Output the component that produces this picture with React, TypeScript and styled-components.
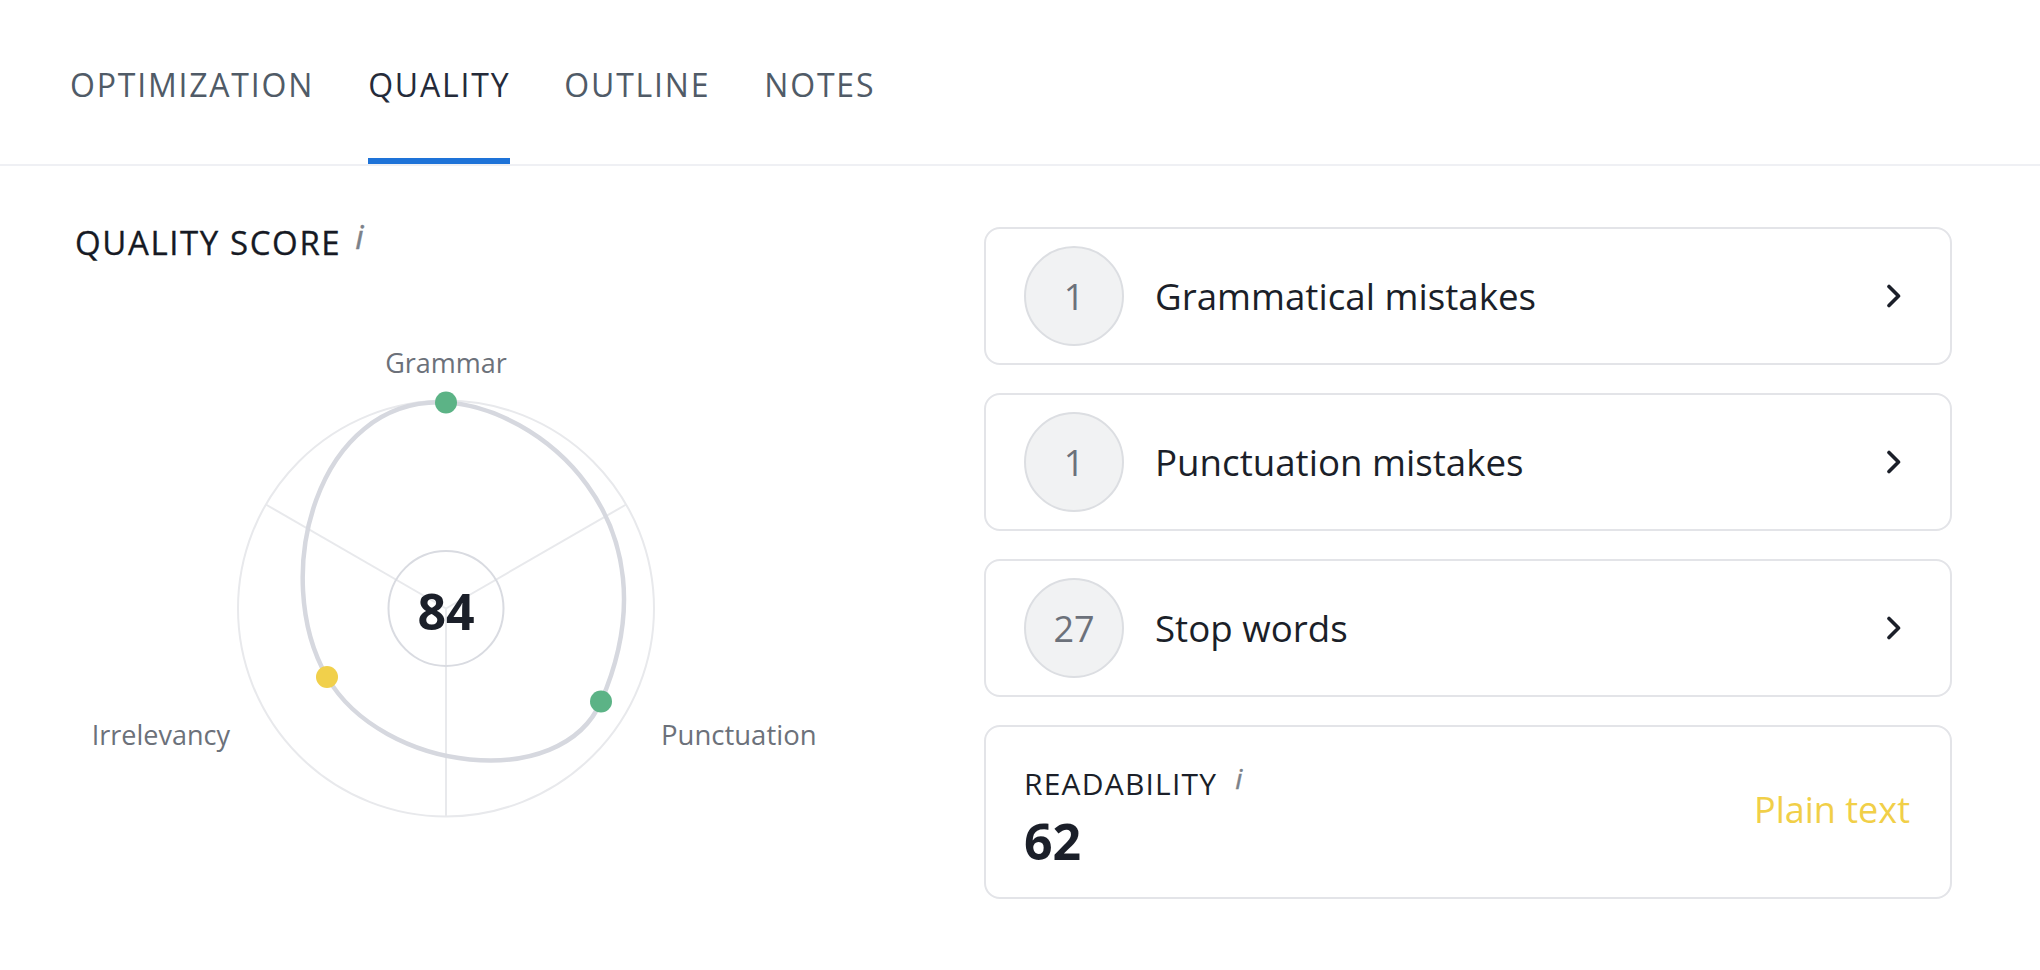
import React from "react";
import styled, { createGlobalStyle } from "styled-components";

const GlobalStyle = createGlobalStyle`
  html, body { margin: 0; padding: 0; background: #ffffff; }
  body {
    font-family: "Open Sans", "Noto Sans", "Liberation Sans", sans-serif;
    color: #1b1f29;
  }
  * { box-sizing: border-box; }
`;

const FONT = "'Open Sans', 'Noto Sans', sans-serif";

const Page = styled.div`
  width: 2040px;
  min-height: 970px;
  background: #ffffff;
`;

const TabBar = styled.nav`
  display: flex;
  gap: 54px;
  height: 166px;
  padding: 0 70px;
  border-bottom: 2px solid #eff0f4;
`;

const Tab = styled.div<{ $active?: boolean }>`
  height: 164px;
  padding-top: 65px;
  font-size: 32px;
  line-height: 40px;
  letter-spacing: 1.8px;
  text-transform: uppercase;
  color: ${(p) => (p.$active ? "#252b3a" : "#505b67")};
  border-bottom: 6px solid ${(p) => (p.$active ? "#1e73d8" : "transparent")};
  cursor: pointer;
`;

const Content = styled.main`
  display: grid;
  grid-template-columns: 909px 968px;
  padding: 57px 0 0 75px;
`;

const LeftColumn = styled.section`
  display: flex;
  flex-direction: column;
`;

const Title = styled.h2`
  margin: 0;
  font-size: 33px;
  line-height: 40px;
  font-weight: 400;
  letter-spacing: 1.6px;
  color: #161a24;
  display: flex;
  align-items: flex-start;
  -webkit-text-stroke: 0.3px #161a24;
`;

const Info = styled.i<{ $size: number; $gap: number; $lift: number }>`
  font-size: ${(p) => p.$size}px;
  line-height: 1;
  letter-spacing: 0;
  font-weight: 400;
  color: #7b8189;
  -webkit-text-stroke: 0.4px #7b8189;
  margin-left: ${(p) => p.$gap}px;
  position: relative;
  top: ${(p) => -p.$lift}px;
`;

const ChartSvg = styled.svg`
  display: block;
  margin-top: 37px;
  overflow: visible;
`;

const RightColumn = styled.section`
  display: flex;
  flex-direction: column;
  gap: 28px;
  padding-top: 4px;
`;

const IssueCard = styled.div`
  display: flex;
  align-items: center;
  height: 138px;
  padding: 0 49px 0 38px;
  border: 2px solid #e3e4e8;
  border-radius: 16px;
  background: #ffffff;
  cursor: pointer;
`;

const Badge = styled.div`
  flex: none;
  width: 100px;
  height: 100px;
  border-radius: 50%;
  background: #f1f2f3;
  border: 2px solid #dcdee2;
  display: flex;
  align-items: center;
  justify-content: center;
  font-size: 36px;
  color: #6c717a;
`;

const IssueLabel = styled.div`
  flex: 1;
  margin-left: 31px;
  font-size: 36.7px;
  line-height: 44px;
  color: #1b1f29;
`;

const ReadabilityCard = styled.div`
  display: flex;
  justify-content: space-between;
  height: 174px;
  padding: 39px 40px 27px 38px;
  border: 2px solid #e3e4e8;
  border-radius: 16px;
`;

const ReadBlock = styled.div`
  display: flex;
  flex-direction: column;
`;

const ReadLabel = styled.div`
  font-size: 30px;
  line-height: 36px;
  letter-spacing: 1.2px;
  color: #1b1f29;
  display: flex;
  align-items: flex-start;
`;

const ReadValue = styled.div`
  margin-top: 11px;
  font-size: 50px;
  line-height: 56px;
  font-weight: 700;
  color: #1b1f29;
`;

const ReadVerdict = styled.div`
  align-self: center;
  margin-bottom: 16px;
  font-size: 36px;
  line-height: 44px;
  color: #f1cf48;
`;

const Chevron = () => (
  <svg width="14" height="24" viewBox="0 0 14 24" fill="none">
    <path
      d="M2 2.5 L11.5 12 L2 21.5"
      stroke="#1b1f29"
      strokeWidth="3.6"
      strokeLinecap="round"
      strokeLinejoin="round"
    />
  </svg>
);

const CX = 371;
const CY = 308.5;
const R = 208;

type Pt = [number, number];
const G: Pt = [0, -206];
const P: Pt = [155, 93];
const I: Pt = [-119, 68.5];

const segments: [Pt, Pt, Pt][] = [
  [[90, -201.5], [234.4, -90.6], P],
  [[115.3, 184.8], [-64, 163.8], I],
  [[-176.5, -31.1], [-130, -212.5], G],
];

const pt = (p: Pt) => `${(p[0] + CX).toFixed(2)},${(p[1] + CY).toFixed(2)}`;
const curvePath =
  `M${pt(G)} ` + segments.map(([a, b, c]) => `C${pt(a)} ${pt(b)} ${pt(c)}`).join(" ") + " Z";

const dots = [
  { p: G, color: "#5cb386" },
  { p: P, color: "#5cb386" },
  { p: I, color: "#f1d04b" },
];

const spokeDx = R * Math.cos(Math.PI / 6);
const spokeDy = R * Math.sin(Math.PI / 6);

const QualityChart = () => (
  <ChartSvg width="909" height="530" viewBox="0 0 909 530">
    <circle cx={CX} cy={CY} r={R} fill="none" stroke="#e8e9ec" strokeWidth="2" />
    <line x1={CX} y1={CY} x2={CX - spokeDx} y2={CY - spokeDy} stroke="#e8e9ec" strokeWidth="2" />
    <line x1={CX} y1={CY} x2={CX + spokeDx} y2={CY - spokeDy} stroke="#e8e9ec" strokeWidth="2" />
    <line x1={CX} y1={CY} x2={CX} y2={CY + R} stroke="#e8e9ec" strokeWidth="2" />
    <circle cx={CX} cy={CY} r={57.5} fill="none" stroke="#d9dbe1" strokeWidth="2" />
    <path d={curvePath} fill="none" stroke="#d6d8df" strokeWidth="4.5" />
    {dots.map((d, i) => (
      <circle key={i} cx={CX + d.p[0]} cy={CY + d.p[1]} r={11} fill={d.color} />
    ))}
    <text x={CX} y={CY + 21.5} textAnchor="middle" fontSize="50" fontWeight="700" fill="#1b1f29" fontFamily={FONT}>
      84
    </text>
    <text x={CX} y={73} textAnchor="middle" fontSize="27" fill="#6c717a" fontFamily={FONT}>
      Grammar
    </text>
    <text x={586} y={445} textAnchor="start" fontSize="27.5" fill="#6c717a" fontFamily={FONT}>
      Punctuation
    </text>
    <text x={155} y={445} textAnchor="end" fontSize="27" fill="#6c717a" fontFamily={FONT}>
      Irrelevancy
    </text>
  </ChartSvg>
);

const tabs = ["Optimization", "Quality", "Outline", "Notes"];

const issues = [
  { count: 1, label: "Grammatical mistakes" },
  { count: 1, label: "Punctuation mistakes" },
  { count: 27, label: "Stop words" },
];

export default function App() {
  return (
    <Page>
      <GlobalStyle />
      <TabBar>
        {tabs.map((t) => (
          <Tab key={t} $active={t === "Quality"}>
            {t}
          </Tab>
        ))}
      </TabBar>
      <Content>
        <LeftColumn>
          <Title>
            QUALITY SCORE
            <Info $size={33} $gap={14} $lift={3.5}>i</Info>
          </Title>
          <QualityChart />
        </LeftColumn>
        <RightColumn>
          {issues.map((it) => (
            <IssueCard key={it.label}>
              <Badge>{it.count}</Badge>
              <IssueLabel>{it.label}</IssueLabel>
              <Chevron />
            </IssueCard>
          ))}
          <ReadabilityCard>
            <ReadBlock>
              <ReadLabel>
                READABILITY
                <Info $size={28} $gap={18} $lift={2}>i</Info>
              </ReadLabel>
              <ReadValue>62</ReadValue>
            </ReadBlock>
            <ReadVerdict>Plain text</ReadVerdict>
          </ReadabilityCard>
        </RightColumn>
      </Content>
    </Page>
  );
}
